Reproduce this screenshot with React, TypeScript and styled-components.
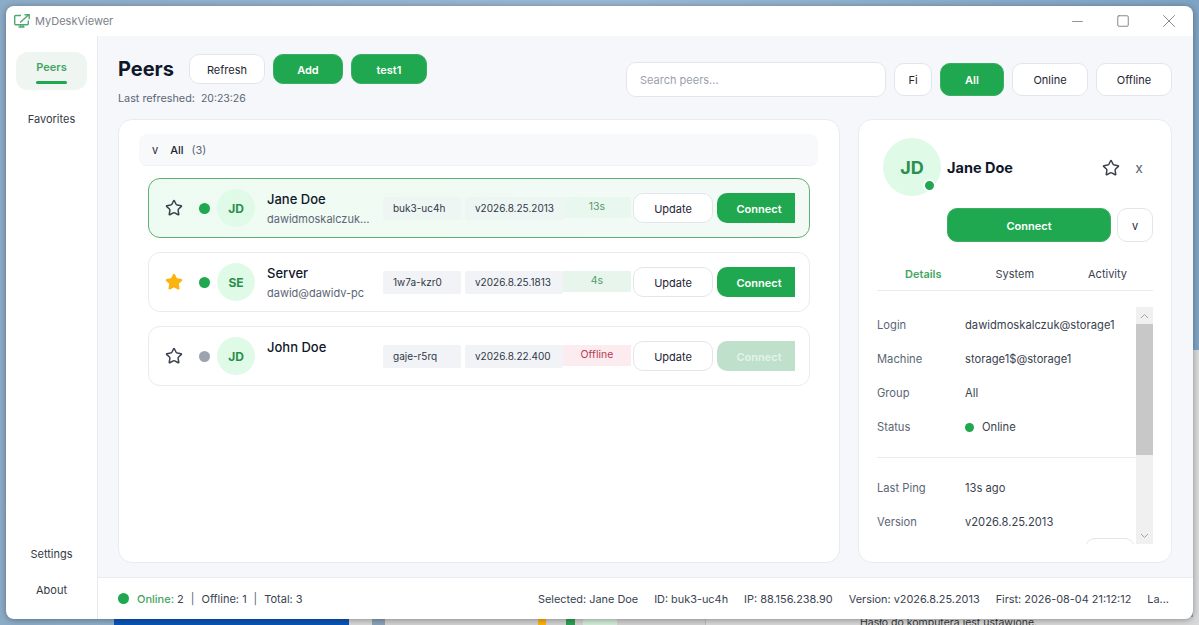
import React from "react"
import styled, { createGlobalStyle } from "styled-components"
import { Star, X, Minus, Square } from "lucide-react"

const GREEN = "#1fa84f"

const GlobalStyle = createGlobalStyle`
    html, body, #root {
        margin: 0;
        height: 100%;
    }
    body {
        overflow: hidden;
        font-family: Inter, "Liberation Sans", sans-serif;
        color: #1e2533;
        background:
            linear-gradient(#d8d9da, #d8d9da) 100% 100% / 6px 275px no-repeat,
            linear-gradient(90deg, #8cabc7, #9ab8d3 50%, #7fa3c2);
    }
`
const Desktop = styled.div`
    position: relative;
    height: 100%;
    box-sizing: border-box;
    padding: 6px;
    display: flex;
`
// what shows of the windows below, under the app window
const BehindStrip = styled.div`
    position: absolute;
    left: 114px;
    right: 0;
    bottom: 0;
    height: 8px;
    background: linear-gradient(
        90deg,
        #0b55b8 0 235px,
        #d8d8d8 235px 258px,
        #8ba2b8 258px 271px,
        #d2d2d2 271px 424px,
        #fbb30f 424px 432px,
        #d2d2d2 432px 452px,
        #2f9e56 452px 461px,
        #d2d2d2 461px 469px,
        #d3ecd9 469px 503px,
        #d2d2d2 503px 591px,
        #bcbcbc 591px 592px,
        #d8d8d8 592px
    );
`
const BehindText = styled.div`
    position: absolute;
    left: 860px;
    top: 616px;
    font-size: 10.5px;
    color: #333;
    white-space: nowrap;
`
const Win = styled.div`
    position: relative;
    flex: 1;
    display: flex;
    flex-direction: column;
    background: #fff;
    border-radius: 8px;
    overflow: hidden;
    box-shadow: 0 1px 6px rgba(0, 0, 0, 0.35);
`
const TitleBar = styled.div`
    height: 30px;
    flex: none;
    display: flex;
    align-items: center;
    padding: 0 1px 0 8px;
    gap: 5px;
`
const AppName = styled.span`
    font-size: 11px;
    color: #7c8288;
`
const WinButtons = styled.div`
    margin-left: auto;
    display: flex;
    color: #808080;
`
const WinButton = styled.div`
    width: 46px;
    height: 30px;
    display: flex;
    align-items: center;
    justify-content: center;
`
const Body = styled.div`
    flex: 1;
    min-height: 0;
    display: flex;
`
const Sidebar = styled.nav`
    width: 92px;
    flex: none;
    box-sizing: border-box;
    border-right: 1px solid #e6e9ef;
    padding: 16px 10px 11px;
    display: flex;
    flex-direction: column;
    gap: 10px;
`
const NavItem = styled.div<{ $active?: boolean }>`
    position: relative;
    height: 38px;
    flex: none;
    border-radius: 12px;
    display: flex;
    align-items: center;
    justify-content: center;
    padding-bottom: ${p => (p.$active ? "9px" : "0")};
    box-sizing: border-box;
    font-size: 11px;
    font-weight: ${p => (p.$active ? 600 : 400)};
    color: ${p => (p.$active ? "#3fa561" : "#333a46")};
    background: ${p => (p.$active ? "#eff5f1" : "transparent")};
`
const NavMark = styled.span`
    position: absolute;
    left: 20px;
    right: 20px;
    bottom: 6px;
    height: 3px;
    border-radius: 2px;
    background: ${GREEN};
`
const NavBottom = styled.div`
    margin-top: auto;
    display: flex;
    flex-direction: column;
    ${NavItem} {
        height: 36px;
    }
`
const Main = styled.div`
    flex: 1;
    min-width: 0;
    display: flex;
    flex-direction: column;
`
const Content = styled.div`
    flex: 1;
    min-height: 0;
    background: #f5f7fb;
    padding: 18px 21px 14px 20px;
    display: flex;
    flex-direction: column;
`
const Header = styled.div`
    display: flex;
    justify-content: space-between;
    height: 65px;
    flex: none;
`
const HeaderLeft = styled.div`
    display: flex;
    flex-direction: column;
`
const TitleRow = styled.div`
    display: flex;
    align-items: center;
    gap: 8px;
`
const Title = styled.h1`
    margin: 0 7px 0 0;
    padding-top: 1px;
    font-size: 20px;
    line-height: 29px;
    font-weight: 700;
    color: #0f172a;
`
const Refreshed = styled.div`
    margin-top: 8px;
    font-size: 10.8px;
    color: #5c6675;
`
const RefreshedTime = styled.span`
    margin-left: 6px;
    font-size: 10.5px;
`
const Btn = styled.button<{ $primary?: boolean; $w: number; $h?: number }>`
    width: ${p => p.$w}px;
    height: ${p => p.$h ?? 30}px;
    padding: 1px 0 0;
    flex: none;
    border-radius: 10px;
    font-family: inherit;
    font-size: 11px;
    font-weight: ${p => (p.$primary ? 600 : 400)};
    color: ${p => (p.$primary ? "#fff" : "#1e2533")};
    background: ${p => (p.$primary ? GREEN : "#fff")};
    border: 1px solid ${p => (p.$primary ? "#3aae62" : "#e2e6ec")};
`
const Filters = styled.div`
    display: flex;
    align-items: center;
    gap: 8px;
    height: 35px;
    margin-top: 8px;
`
const Search = styled.input`
    width: 260px;
    height: 35px;
    box-sizing: border-box;
    border: 1px solid #e2e6ec;
    border-radius: 10px;
    background: #fff;
    padding: 0 13px;
    font-family: inherit;
    font-size: 11px;
    &::placeholder {
        color: #9aa1ad;
    }
`
const Panels = styled.div`
    flex: 1;
    min-height: 0;
    display: flex;
    gap: 18px;
`
const Card = styled.section`
    background: #fff;
    border: 1px solid #e8ebf0;
    border-radius: 14px;
    box-sizing: border-box;
`
const ListCard = styled(Card)`
    flex: 1;
    min-width: 0;
    padding: 14px 21px 0 20px;
`
const GroupHeader = styled.div`
    height: 32px;
    border-radius: 8px;
    background: #f8f9fb;
    border-bottom: 1px solid #f0f2f5;
    box-sizing: border-box;
    display: flex;
    align-items: center;
    padding-left: 13px;
    font-size: 11px;
    color: #1e2533;
`
const GroupName = styled.span`
    margin-left: 12px;
    font-weight: 500;
`
const GroupCount = styled.span`
    margin-left: 8px;
    color: #5c6675;
`
const Rows = styled.div`
    display: flex;
    flex-direction: column;
    gap: 14px;
    margin: 12px 8px 0 9px;
`
const Row = styled.div<{ $selected?: boolean }>`
    height: 60px;
    box-sizing: border-box;
    display: flex;
    align-items: center;
    padding-left: 16px;
    border-radius: 12px;
    border: 1px solid ${p => (p.$selected ? "#5fae74" : "#e8ebf0")};
    background: ${p => (p.$selected ? "linear-gradient(90deg, #eefbf2, #f3faf6)" : "#fff")};
`
const StarSlot = styled.div`
    width: 18px;
    height: 18px;
    flex: none;
    margin-right: 16px;
    display: flex;
`
const Dot = styled.span<{ $on?: boolean; $size?: number }>`
    display: block;
    flex: none;
    width: ${p => p.$size ?? 11}px;
    height: ${p => p.$size ?? 11}px;
    border-radius: 50%;
    background: ${p => (p.$on ? GREEN : "#9ea3b0")};
`
const Avatar = styled.div<{ $size?: number }>`
    position: relative;
    flex: none;
    width: ${p => p.$size ?? 38}px;
    height: ${p => p.$size ?? 38}px;
    border-radius: 50%;
    background: #e0fae8;
    color: #2b8f4e;
    font-weight: 700;
    font-size: ${p => (p.$size ? 18 : 12)}px;
    display: flex;
    align-items: center;
    justify-content: center;
`
const RowAvatar = styled(Avatar)`
    margin-left: 7px;
`
const Names = styled.div`
    width: 116px;
    flex: none;
    margin-left: 12px;
    align-self: flex-start;
    padding-top: 11px;
`
const Name = styled.div`
    font-size: 13px;
    line-height: 18px;
    font-weight: 500;
    color: #0f172a;
`
const Sub = styled.div`
    margin-top: 3px;
    font-size: 11px;
    line-height: 16px;
    color: #5c6675;
    white-space: nowrap;
    overflow: hidden;
    text-overflow: ellipsis;
    width: 104px;
`
const Chip = styled.div<{ $w: number; $selected?: boolean }>`
    width: ${p => p.$w}px;
    flex: none;
    height: 23px;
    box-sizing: border-box;
    padding-left: 10px;
    font-size: 10px;
    line-height: 23px;
    color: #2f3846;
    background: ${p => (p.$selected ? "#eef6f4" : "#f1f3f7")};
    border-radius: 2px;
    margin-right: 4px;
`
const Ping = styled.div<{ $tone: "on" | "on-sel" | "off" }>`
    width: 68px;
    flex: none;
    height: 21px;
    margin: -2px 2px 0 -4px;
    text-align: center;
    font-size: 10.5px;
    line-height: 19px;
    color: ${p => (p.$tone === "off" ? "#b83a50" : "#569a69")};
    background: ${p =>
        p.$tone === "off" ? "#fdecef" : p.$tone === "on" ? "#e7f5ec" : "#e9f8ee"};
`
const UpdateBtn = styled(Btn)`
    margin-right: 4px;
`
const ConnectBtn = styled(Btn)<{ $disabled?: boolean }>`
    padding-left: 6px;
    border-radius: 10px 0 0 10px;
    border: none;
    background: ${p => (p.$disabled ? "#bfe0ca" : GREEN)};
    color: ${p => (p.$disabled ? "#e4f3e9" : "#fff")};
`
const DetailCard = styled(Card)`
    width: 314px;
    flex: none;
    padding: 18px 18px 0 18px;
    display: flex;
    flex-direction: column;
    overflow: hidden;
`
const DetailTop = styled.div`
    display: flex;
    align-items: center;
    padding-left: 6px;
    height: 58px;
    flex: none;
`
const AvatarDot = styled.span`
    position: absolute;
    right: 5px;
    bottom: 4px;
    width: 9px;
    height: 9px;
    border-radius: 50%;
    border: 2px solid #fff;
    background: ${GREEN};
`
const DetailName = styled.div`
    margin-left: 6px;
    padding-top: 1px;
    font-size: 14.5px;
    font-weight: 700;
    color: #0f172a;
`
const DetailActions = styled.div`
    margin-left: auto;
    display: flex;
    align-items: center;
    gap: 15px;
    padding: 1px 10px 0 0;
`
const CloseMark = styled.span`
    font-size: 14px;
    color: #5c6675;
`
const ConnectRow = styled.div`
    display: flex;
    justify-content: flex-end;
    gap: 6px;
    margin-top: 12px;
    flex: none;
`
const Tabs = styled.div`
    display: flex;
    justify-content: space-between;
    margin-top: 23px;
    padding: 0 26px 0 28px;
    height: 25px;
    border-bottom: 1px solid #e8ebf0;
    flex: none;
`
const Tab = styled.div<{ $active?: boolean }>`
    font-size: 11px;
    line-height: 18px;
    font-weight: ${p => (p.$active ? 600 : 400)};
    color: ${p => (p.$active ? "#3fa561" : "#3a4250")};
`
const ScrollArea = styled.div`
    flex: 1;
    min-height: 0;
    margin: 16px 0 18px;
    display: flex;
`
const DetailBody = styled.div`
    flex: 1;
    min-width: 0;
    padding-top: 1px;
    overflow: hidden;
`
const Info = styled.div`
    display: flex;
    align-items: center;
    height: 34px;
    font-size: 11.2px;
`
const InfoKey = styled.div`
    width: 88px;
    flex: none;
    color: #5c6675;
`
const InfoVal = styled.div`
    display: flex;
    align-items: center;
    gap: 8px;
    color: #3a4250;
    white-space: nowrap;
`
const Rule = styled.div`
    height: 1px;
    background: #e8ebf0;
    margin: 13px 0;
`
const HiddenBtn = styled.div`
    width: 50px;
    height: 20px;
    margin: -1px 0 0 208px;
    box-sizing: border-box;
    border: 1px solid #e2e6ec;
    border-radius: 10px;
    background: #fff;
`
const Track = styled.div`
    width: 17px;
    flex: none;
    background: #f0f0f0;
    display: flex;
    flex-direction: column;
`
const TrackArrow = styled.div`
    height: 17px;
    flex: none;
    display: flex;
    align-items: center;
    justify-content: center;
`
const Thumb = styled.div`
    height: 131px;
    flex: none;
    background: #c8c8c8;
`
const TrackRest = styled.div`
    flex: 1;
`
const StatusBar = styled.footer`
    height: 42px;
    flex: none;
    box-sizing: border-box;
    border-top: 1px solid #e8ebf0;
    display: flex;
    align-items: center;
    padding: 0 24px 0 20px;
    font-size: 11px;
    color: #3a4250;
    white-space: nowrap;
`
const OnlineLabel = styled.span`
    margin-left: 8px;
    color: #3fa561;
    font-weight: 500;
`
const Sep = styled.span`
    margin: 0 7px;
    color: #5c6675;
`
const StatusRight = styled.div`
    margin-left: auto;
    display: flex;
    gap: 16px;
    font-size: 10.9px;
`

const peers = [
    { star: false, on: true, initials: "JD", name: "Jane Doe", sub: "dawidmoskalczuk@storage1", id: "buk3-uc4h", version: "v2026.8.25.2013", ping: "13s", selected: true },
    { star: true, on: true, initials: "SE", name: "Server", sub: "dawid@dawidv-pc", id: "1w7a-kzr0", version: "v2026.8.25.1813", ping: "4s", selected: false },
    { star: false, on: false, initials: "JD", name: "John Doe", sub: "", id: "gaje-r5rq", version: "v2026.8.22.400", ping: "Offline", selected: false },
]

const StarIcon = ({ filled }: { filled?: boolean }) => (
    <Star
        size={18}
        strokeWidth={2}
        color={filled ? "#fbb30f" : "#3a4250"}
        fill={filled ? "#fbb30f" : "none"}
    />
)

const Logo = () => (
    <svg width="16" height="14" viewBox="0 0 16 14" fill="none" stroke="#4fa871" strokeWidth="1.4">
        <path d="M7 1.5H1.6a.9.9 0 0 0-.9.9v7.4a.9.9 0 0 0 .9.9h11.8a.9.9 0 0 0 .9-.9V6.5" />
        <path d="M4.5 13h6M6.5 10.8V13M9 10.8V13" />
        <path d="M6 8.5 L14.5 1M10.5.8h4.7v4.5" />
    </svg>
)

const App = () => {
    return (
        <>
            <GlobalStyle />
            <Desktop>
                <BehindStrip />
                <BehindText>Hasło do komputera jest ustawione.</BehindText>
                <Win>
                    <TitleBar>
                        <Logo />
                        <AppName>MyDeskViewer</AppName>
                        <WinButtons>
                            <WinButton><Minus size={17} strokeWidth={1.2} /></WinButton>
                            <WinButton><Square size={14} strokeWidth={1.6} /></WinButton>
                            <WinButton><X size={22} strokeWidth={1} /></WinButton>
                        </WinButtons>
                    </TitleBar>
                    <Body>
                        <Sidebar>
                            <NavItem $active>Peers<NavMark /></NavItem>
                            <NavItem>Favorites</NavItem>
                            <NavBottom>
                                <NavItem>Settings</NavItem>
                                <NavItem>About</NavItem>
                            </NavBottom>
                        </Sidebar>
                        <Main>
                            <Content>
                                <Header>
                                    <HeaderLeft>
                                        <TitleRow>
                                            <Title>Peers</Title>
                                            <Btn $w={76}>Refresh</Btn>
                                            <Btn $w={70} $primary>Add</Btn>
                                            <Btn $w={76} $primary>test1</Btn>
                                        </TitleRow>
                                        <Refreshed>Last refreshed:<RefreshedTime>20:23:26</RefreshedTime></Refreshed>
                                    </HeaderLeft>
                                    <Filters>
                                        <Search placeholder="Search peers..." />
                                        <Btn $w={38} $h={33}>Fi</Btn>
                                        <Btn $w={64} $h={33} $primary>All</Btn>
                                        <Btn $w={76} $h={33}>Online</Btn>
                                        <Btn $w={76} $h={33}>Offline</Btn>
                                    </Filters>
                                </Header>
                                <Panels>
                                    <ListCard>
                                        <GroupHeader>
                                            v<GroupName>All</GroupName><GroupCount>(3)</GroupCount>
                                        </GroupHeader>
                                        <Rows>
                                            {peers.map(p => (
                                                <Row key={p.id} $selected={p.selected}>
                                                    <StarSlot><StarIcon filled={p.star} /></StarSlot>
                                                    <Dot $on={p.on} />
                                                    <RowAvatar>{p.initials}</RowAvatar>
                                                    <Names>
                                                        <Name>{p.name}</Name>
                                                        <Sub>{p.sub}</Sub>
                                                    </Names>
                                                    <Chip $w={78} $selected={p.selected}>{p.id}</Chip>
                                                    <Chip $w={98} $selected={p.selected}>{p.version}</Chip>
                                                    <Ping $tone={!p.on ? "off" : p.selected ? "on-sel" : "on"}>{p.ping}</Ping>
                                                    <UpdateBtn $w={80}>Update</UpdateBtn>
                                                    <ConnectBtn $w={78} $primary $disabled={!p.on}>Connect</ConnectBtn>
                                                </Row>
                                            ))}
                                        </Rows>
                                    </ListCard>
                                    <DetailCard>
                                        <DetailTop>
                                            <Avatar $size={58}>JD<AvatarDot /></Avatar>
                                            <DetailName>Jane Doe</DetailName>
                                            <DetailActions>
                                                <StarIcon />
                                                <CloseMark>x</CloseMark>
                                            </DetailActions>
                                        </DetailTop>
                                        <ConnectRow>
                                            <Btn $w={164} $h={34} $primary>Connect</Btn>
                                            <Btn $w={36} $h={34}>v</Btn>
                                        </ConnectRow>
                                        <Tabs>
                                            <Tab $active>Details</Tab>
                                            <Tab>System</Tab>
                                            <Tab>Activity</Tab>
                                        </Tabs>
                                        <ScrollArea>
                                            <DetailBody>
                                                <Info><InfoKey>Login</InfoKey><InfoVal>dawidmoskalczuk@storage1</InfoVal></Info>
                                                <Info><InfoKey>Machine</InfoKey><InfoVal>storage1$@storage1</InfoVal></Info>
                                                <Info><InfoKey>Group</InfoKey><InfoVal>All</InfoVal></Info>
                                                <Info><InfoKey>Status</InfoKey><InfoVal><Dot $on $size={9} />Online</InfoVal></Info>
                                                <Rule />
                                                <Info><InfoKey>Last Ping</InfoKey><InfoVal>13s ago</InfoVal></Info>
                                                <Info><InfoKey>Version</InfoKey><InfoVal>v2026.8.25.2013</InfoVal></Info>
                                                <HiddenBtn />
                                            </DetailBody>
                                            <Track>
                                                <TrackArrow>
                                                    <svg width="9" height="6" viewBox="0 0 9 6" fill="none" stroke="#a3a3a3"><path d="M1 5l3.5-3.5L8 5" /></svg>
                                                </TrackArrow>
                                                <Thumb />
                                                <TrackRest />
                                                <TrackArrow>
                                                    <svg width="9" height="6" viewBox="0 0 9 6" fill="none" stroke="#a3a3a3"><path d="M1 1l3.5 3.5L8 1" /></svg>
                                                </TrackArrow>
                                            </Track>
                                        </ScrollArea>
                                    </DetailCard>
                                </Panels>
                            </Content>
                            <StatusBar>
                                <Dot $on />
                                <OnlineLabel>Online:</OnlineLabel>&nbsp;2<Sep>|</Sep>Offline: 1<Sep>|</Sep>Total: 3
                                <StatusRight>
                                    <span>Selected: Jane Doe</span>
                                    <span>ID: buk3-uc4h</span>
                                    <span>IP: 88.156.238.90</span>
                                    <span>Version: v2026.8.25.2013</span>
                                    <span>First: 2026-08-04 21:12:12</span>
                                    <span>La...</span>
                                </StatusRight>
                            </StatusBar>
                        </Main>
                    </Body>
                </Win>
            </Desktop>
        </>
    )
}

export default App
